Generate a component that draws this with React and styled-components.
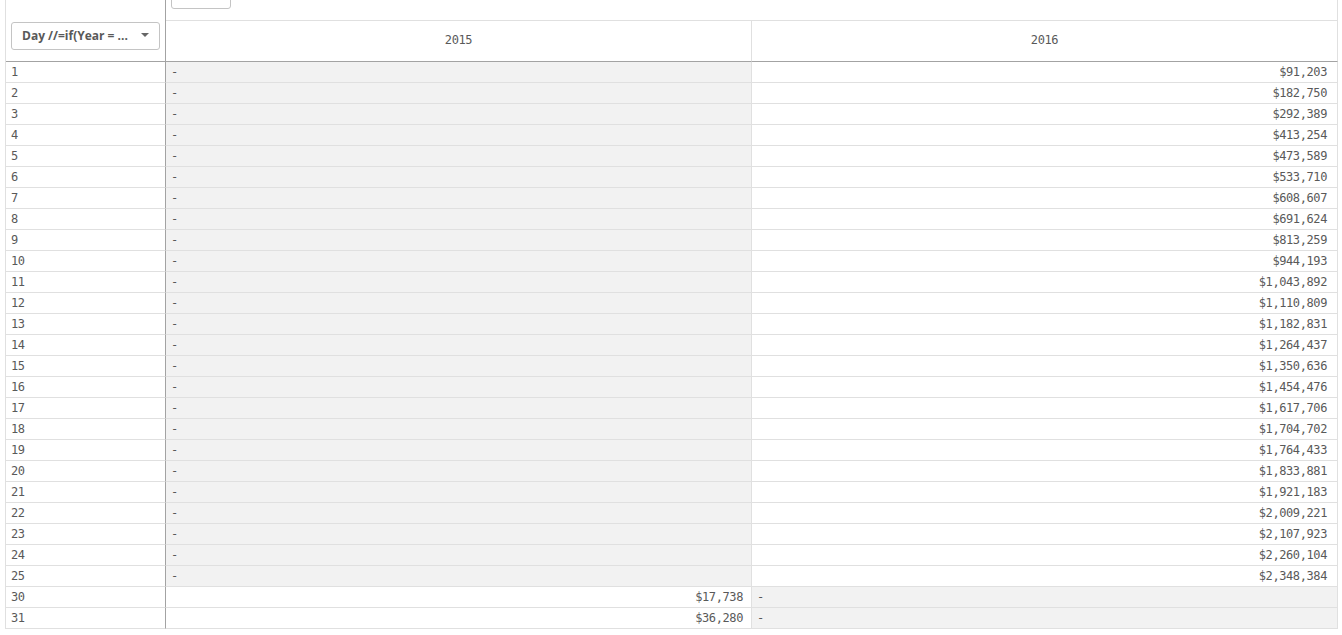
import React from 'react';
import styled, { createGlobalStyle } from 'styled-components';

const GlobalStyle = createGlobalStyle`
  body {
    margin: 0;
    background: #fff;
    color: #595959;
    font-family: "DejaVu Sans Mono", "Liberation Mono", monospace;
  }
`;

const Frame = styled.div`
  margin-left: 5px;
  width: 1333px;
  box-sizing: border-box;
  border-left: 1px solid #e0e0e0;
  display: grid;
  grid-template-columns: 160px 586px 586px;
  grid-template-rows: 21px 41px repeat(27, 21px);
  font-size: 12px;
  letter-spacing: -0.4px;
`;

const Corner = styled.div`
  grid-row: 1 / span 2;
  box-sizing: border-box;
  border-right: 1px solid #a3a3a3;
  border-bottom: 1px solid #a3a3a3;
  display: flex;
  align-items: flex-end;
  padding: 0 0 11px 5px;
`;

const Dropdown = styled.div`
  width: 149px;
  height: 28px;
  box-sizing: border-box;
  border: 1px solid #c4c4c4;
  border-radius: 3px;
  display: flex;
  align-items: center;
  padding: 0 0 2px 10px;
  font-family: "Open Sans", Lato, sans-serif;
  font-weight: 700;
  font-size: 12px;
  letter-spacing: 0;
  color: #595959;
`;

const DropLabel = styled.span`
  flex: 1;
  white-space: nowrap;
`;

const Caret = styled.span`
  width: 0;
  height: 0;
  margin-right: 10px;
  border-left: 4px solid transparent;
  border-right: 4px solid transparent;
  border-top: 4px solid #666;
`;

const TopStrip = styled.div`
  grid-column: 2 / span 2;
  box-sizing: border-box;
  border-right: 1px solid #e0e0e0;
  border-bottom: 1px solid #e0e0e0;
  padding-left: 5px;
`;

const MiniButton = styled.div`
  width: 60px;
  height: 21px;
  margin-top: -12px;
  box-sizing: border-box;
  border: 1px solid #c4c4c4;
  border-radius: 3px;
`;

const HeadCell = styled.div`
  box-sizing: border-box;
  border-right: 1px solid #e0e0e0;
  border-bottom: 1px solid #a3a3a3;
  display: flex;
  align-items: center;
  justify-content: center;
  padding-bottom: 2px;
`;

const DayCell = styled.div`
  box-sizing: border-box;
  border-right: 1px solid #a3a3a3;
  border-bottom: 1px solid #e0e0e0;
  display: flex;
  align-items: center;
  padding-left: 5px;
`;

const ValueCell = styled.div`
  box-sizing: border-box;
  border-right: 1px solid #e0e0e0;
  border-bottom: 1px solid #e0e0e0;
  background: ${p => (p.$empty ? '#f2f2f2' : '#fff')};
  display: flex;
  align-items: center;
  justify-content: ${p => (p.$empty ? 'flex-start' : 'flex-end')};
  padding: ${p => (p.$empty ? '0 0 0 5px' : `0 ${p.$pad}px 0 0`)};
`;

const v2016 = [
  '$91,203', '$182,750', '$292,389', '$413,254', '$473,589', '$533,710',
  '$608,607', '$691,624', '$813,259', '$944,193', '$1,043,892', '$1,110,809',
  '$1,182,831', '$1,264,437', '$1,350,636', '$1,454,476', '$1,617,706',
  '$1,704,702', '$1,764,433', '$1,833,881', '$1,921,183', '$2,009,221',
  '$2,107,923', '$2,260,104', '$2,348,384'
];

const rows = [
  ...v2016.map((v, i) => ({ day: String(i + 1), y2015: null, y2016: v })),
  { day: '30', y2015: '$17,738', y2016: null },
  { day: '31', y2015: '$36,280', y2016: null }
];

const App = () => (
  <>
    <GlobalStyle />
    <Frame>
      <Corner>
        <Dropdown>
          <DropLabel>Day //=if(Year = ...</DropLabel>
          <Caret />
        </Dropdown>
      </Corner>
      <TopStrip>
        <MiniButton />
      </TopStrip>
      <HeadCell>2015</HeadCell>
      <HeadCell>2016</HeadCell>
      {rows.map(r => (
        <React.Fragment key={r.day}>
          <DayCell>{r.day}</DayCell>
          <ValueCell $empty={!r.y2015} $pad={8}>{r.y2015 || '-'}</ValueCell>
          <ValueCell $empty={!r.y2016} $pad={10}>{r.y2016 || '-'}</ValueCell>
        </React.Fragment>
      ))}
    </Frame>
  </>
);

export default App;
